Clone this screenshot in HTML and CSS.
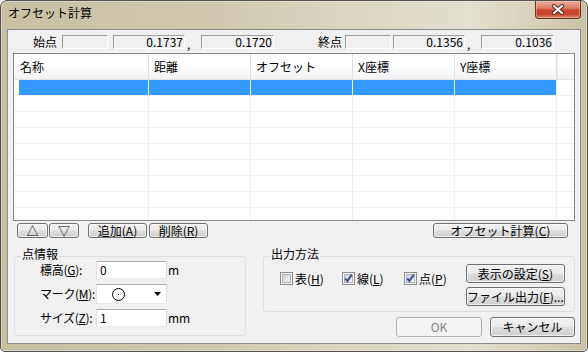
FILE: index.html
```html
<!DOCTYPE html>
<html lang="ja">
<head>
<meta charset="utf-8">
<title>オフセット計算</title>
<link rel="stylesheet" href="styles.css">
</head>
<body>
<div class="window">
  <div class="titlebar">
    <span class="title">オフセット計算</span>
    <div class="close">
      <svg width="14" height="11" viewBox="0 0 14 11">
        <path d="M3 2 L11 9 M11 2 L3 9" stroke="#5a2a20" stroke-width="4.2" stroke-linecap="round" fill="none"/>
        <path d="M3 2 L11 9 M11 2 L3 9" stroke="#ffffff" stroke-width="2.2" stroke-linecap="round" fill="none"/>
      </svg>
    </div>
  </div>
  <div class="client">
    <div class="pts">
      <span class="lbl lbl-start">始点</span>
      <span class="ro w46 ml5"></span>
      <span class="ro w72 ml5">0.1737</span>
      <span class="comma">,</span>
      <span class="ro w73">0.1720</span>
      <span class="lbl lbl-end">終点</span>
      <span class="ro w46 ml3"></span>
      <span class="ro w72 ml2">0.1356</span>
      <span class="comma">,</span>
      <span class="ro w73">0.1036</span>
    </div>

    <div class="list">
      <div class="lrow head">
        <div class="cell c1">名称</div>
        <div class="cell">距離</div>
        <div class="cell">オフセット</div>
        <div class="cell">X座標</div>
        <div class="cell">Y座標</div>
        <div class="cell c6"></div>
      </div>
      <div class="lrow sel">
        <div class="cell c1"></div><div class="cell"></div><div class="cell"></div><div class="cell"></div><div class="cell"></div><div class="cell c6"></div>
      </div>
      <div class="lrow"><div class="cell c1"></div><div class="cell"></div><div class="cell"></div><div class="cell"></div><div class="cell"></div><div class="cell c6"></div></div>
      <div class="lrow"><div class="cell c1"></div><div class="cell"></div><div class="cell"></div><div class="cell"></div><div class="cell"></div><div class="cell c6"></div></div>
      <div class="lrow"><div class="cell c1"></div><div class="cell"></div><div class="cell"></div><div class="cell"></div><div class="cell"></div><div class="cell c6"></div></div>
      <div class="lrow"><div class="cell c1"></div><div class="cell"></div><div class="cell"></div><div class="cell"></div><div class="cell"></div><div class="cell c6"></div></div>
      <div class="lrow"><div class="cell c1"></div><div class="cell"></div><div class="cell"></div><div class="cell"></div><div class="cell"></div><div class="cell c6"></div></div>
      <div class="lrow"><div class="cell c1"></div><div class="cell"></div><div class="cell"></div><div class="cell"></div><div class="cell"></div><div class="cell c6"></div></div>
      <div class="lrow"><div class="cell c1"></div><div class="cell"></div><div class="cell"></div><div class="cell"></div><div class="cell"></div><div class="cell c6"></div></div>
      <div class="lrow"><div class="cell c1"></div><div class="cell"></div><div class="cell"></div><div class="cell"></div><div class="cell"></div><div class="cell c6"></div></div>
    </div>

    <div class="toolrow">
      <button class="btn b-up">△</button>
      <button class="btn b-dn">▽</button>
      <button class="btn b-add">追加(<u>A</u>)</button>
      <button class="btn b-del">削除(<u>R</u>)</button>
      <button class="btn b-calc">オフセット計算(<u>C</u>)</button>
    </div>

    <div class="bottom">
      <div class="grp grp-pt">
        <div class="grp-title">点情報</div>
        <div class="ptgrid">
          <span class="flabel">標高(<u>G</u>):</span>
          <div class="edit">0</div>
          <span class="unit">m</span>

          <span class="flabel">マーク(<u>M</u>):</span>
          <div class="combo">
            <svg class="mark" width="13" height="13" viewBox="0 0 13 13">
              <circle cx="6.5" cy="6.5" r="6" fill="none" stroke="#000" stroke-width="1"/>
              <rect x="6" y="6" width="1" height="1" fill="#000"/>
            </svg>
            <svg class="arrow" width="7" height="4" viewBox="0 0 7 4">
              <path d="M0 0 H7 L3.5 4 Z" fill="#000"/>
            </svg>
          </div>
          <span></span>

          <span class="flabel">サイズ(<u>Z</u>):</span>
          <div class="edit">1</div>
          <span class="unit">mm</span>
        </div>
      </div>

      <div class="right">
        <div class="grp grp-out">
          <div class="grp-title">出力方法</div>
          <div class="outrow">
            <div class="checks">
              <div class="chk">
                <svg width="13" height="13" viewBox="0 0 13 13">
                  <defs><linearGradient id="cg1" x1="0" y1="0" x2="1" y2="1"><stop offset="0" stop-color="#cbcfd5"/><stop offset="1" stop-color="#f7f7f7"/></linearGradient></defs>
                  <rect x="0.5" y="0.5" width="12" height="12" fill="#f4f4f4" stroke="#8e8f8f"/>
                  <rect x="2.5" y="2.5" width="8" height="8" fill="url(#cg1)" stroke="#aeb3b9"/>
                </svg>
                <span>表(<u>H</u>)</span>
              </div>
              <div class="chk">
                <svg width="13" height="13" viewBox="0 0 13 13">
                  <defs><linearGradient id="cg2" x1="0" y1="0" x2="1" y2="1"><stop offset="0" stop-color="#cbcfd5"/><stop offset="1" stop-color="#f7f7f7"/></linearGradient></defs>
                  <rect x="0.5" y="0.5" width="12" height="12" fill="#f4f4f4" stroke="#8e8f8f"/>
                  <rect x="2.5" y="2.5" width="8" height="8" fill="url(#cg2)" stroke="#aeb3b9"/>
                  <path d="M3.3 6.3 L5.4 9 L9.8 2.6" stroke="#3a4f93" stroke-width="2" fill="none"/>
                </svg>
                <span>線(<u>L</u>)</span>
              </div>
              <div class="chk">
                <svg width="13" height="13" viewBox="0 0 13 13">
                  <defs><linearGradient id="cg3" x1="0" y1="0" x2="1" y2="1"><stop offset="0" stop-color="#cbcfd5"/><stop offset="1" stop-color="#f7f7f7"/></linearGradient></defs>
                  <rect x="0.5" y="0.5" width="12" height="12" fill="#f4f4f4" stroke="#8e8f8f"/>
                  <rect x="2.5" y="2.5" width="8" height="8" fill="url(#cg3)" stroke="#aeb3b9"/>
                  <path d="M3.3 6.3 L5.4 9 L9.8 2.6" stroke="#3a4f93" stroke-width="2" fill="none"/>
                </svg>
                <span>点(<u>P</u>)</span>
              </div>
            </div>
            <div class="outbtns">
              <button class="btn">表示の設定(<u>S</u>)</button>
              <button class="btn">ファイル出力(<u>F</u>)...</button>
            </div>
          </div>
        </div>
        <div class="okrow">
          <button class="btn b-ok disabled">OK</button>
          <button class="btn b-cancel">キャンセル</button>
        </div>
      </div>
    </div>
  </div>
</div>
</body>
</html>
```

FILE: styles.css
```css
* { box-sizing: border-box; }
html, body { margin: 0; padding: 0; }
body {
  width: 588px;
  height: 352px;
  overflow: hidden;
  font-family: "Noto Sans CJK JP", "Noto Sans", sans-serif;
  font-size: 12px;
  color: #000;
  background: #ffffff;
}

.window {
  width: 588px;
  height: 352px;
  border: 1px solid #505050;
  border-radius: 7px 7px 5px 5px;
  background: linear-gradient(90deg, #c8c0a1 0%, #d0c9ae 35%, #dcd7c4 62%, #e3dfd1 80%, #d5ceb5 93%, #c9c1a3 100%);
  box-shadow: inset 0 0 0 1px rgba(255, 255, 255, 0.35);
  display: flex;
  flex-direction: column;
  overflow: hidden;
}

.titlebar {
  flex: none;
  height: 28px;
  display: flex;
  justify-content: space-between;
  align-items: flex-start;
}
.title {
  margin: 4px 0 0 7px;
  line-height: 16px;
  font-size: 12px;
}
.close {
  width: 46px;
  height: 18px;
  margin-right: 6px;
  border: 1px solid #6b3427;
  border-top: none;
  border-radius: 0 0 4px 4px;
  background: linear-gradient(#eab09e 0%, #dc8268 40%, #c7462c 55%, #c94b30 80%, #de8e6e 100%);
  box-shadow: inset 0 0 0 1px rgba(255, 220, 200, 0.35);
  display: flex;
  align-items: center;
  justify-content: center;
}

.client {
  flex: 1;
  margin: 0 6px 7px;
  border: 1px solid #8a8a8a;
  background: #f0f0f0;
  padding: 0 5px;
  display: flex;
  flex-direction: column;
}

/* start / end points row */
.pts {
  flex: none;
  display: flex;
  align-items: flex-start;
  height: 14px;
  margin-top: 5px;
}
.lbl { width: 24px; line-height: 14px; }
.lbl-start { margin-left: 20px; }
.lbl-end { margin-left: 44px; }
.ro {
  height: 14px;
  border: 1px solid;
  border-color: #a0a0a0 #ffffff #ffffff #a0a0a0;
  background: #f0f0f0;
  text-align: right;
  padding-right: 1px;
  line-height: 12px;
}
.w46 { width: 46px; }
.w72 { width: 72px; }
.w73 { width: 73px; }
.ml5 { margin-left: 5px; }
.ml3 { margin-left: 3px; }
.ml2 { margin-left: 2px; }
.comma {
  width: 16px;
  padding: 2px 0 0 2px;
  line-height: 14px;
  height: 16px;
}

/* list view */
.list {
  flex: none;
  margin-top: 4px;
  height: 168px;
  border: 1px solid #828790;
  background: #ffffff;
  overflow: hidden;
}
.lrow {
  display: flex;
  height: 16px;
  border-bottom: 1px solid #f0f0f0;
}
.lrow.head {
  height: 26px;
  border-bottom: 1px solid #e5e5e5;
  background: linear-gradient(#ffffff 0%, #ffffff 40%, #f2f3f5 100%);
}
.cell {
  flex: none;
  width: 102px;
  border-right: 1px solid #f0f0f0;
}
.cell.c1 { width: 135px; }
.cell.c6 { flex: 1; border-right: none; }
.head .cell {
  border-right-color: #dedede;
  padding-left: 5px;
  line-height: 25px;
}
.head .c1 { padding-left: 6px; }
.head .c6 { border-left: 1px solid #ececec; }
.sel .cell { background-color: #3399ff; }
.sel .c1 { padding-left: 5px; background-clip: content-box; }
.sel .c6 { background: none; }

/* buttons */
.btn {
  font: inherit;
  font-size: 12px;
  color: #000;
  padding: 0;
  margin: 0;
  border: 1px solid #707070;
  border-radius: 3px;
  background: linear-gradient(#f2f2f2 0%, #ebebeb 48%, #dddddd 52%, #cfcfcf 100%);
  box-shadow: inset 0 0 0 1px rgba(255, 255, 255, 0.65);
  display: flex;
  align-items: center;
  justify-content: center;
  line-height: 12px;
  white-space: nowrap;
}
.btn.disabled {
  border-color: #adb2b5;
  background: #f4f4f4;
  color: #838383;
  box-shadow: none;
}

.toolrow {
  flex: none;
  display: flex;
  height: 15px;
  margin-top: 2px;
}
.toolrow .btn { height: 15px; }
.b-up { margin-left: 4px; width: 31px; }
.b-dn { margin-left: 1px; width: 30px; }
.b-add { margin-left: 9px; width: 59px; }
.b-del { margin-left: 2px; width: 59px; }
.b-calc { margin-left: auto; margin-right: 7px; width: 135px; }

/* bottom area */
.bottom {
  flex: none;
  display: flex;
  margin-top: 18px;
}
.grp {
  border: 1px solid #d5dfe5;
  border-radius: 3px;
}
.grp-title {
  width: fit-content;
  height: 14px;
  margin: -10px 0 0 6px;
  padding: 0 1px;
  background: #f0f0f0;
  line-height: 14px;
}
.grp-pt {
  margin-left: 1px;
  width: 232px;
  height: 80px;
}
.ptgrid {
  display: grid;
  grid-template-columns: 56px 71px auto;
  grid-template-rows: 18px 20px 18px;
  row-gap: 5px;
  margin-left: 25px;
  align-items: center;
}
.flabel {
  line-height: 14px;
  white-space: nowrap;
  letter-spacing: -0.3px;
}
.edit {
  height: 18px;
  border: 1px solid;
  border-color: #abadb3 #dbdfe6 #e3e9ef #e2e3ea;
  background: #ffffff;
  padding-left: 3px;
  line-height: 16px;
}
.unit { margin-left: 1px; line-height: 14px; }
.combo {
  height: 20px;
  border: 1px solid;
  border-color: #abadb3 #dbdfe6 #e3e9ef #e2e3ea;
  background: #ffffff;
  display: flex;
  align-items: center;
}
.combo .mark { margin-left: 15px; }
.combo .arrow { margin-left: auto; margin-right: 5px; }

.right {
  margin-left: auto;
  width: 312px;
  display: flex;
  flex-direction: column;
}
.grp-out { height: 56px; }
.outrow {
  display: flex;
  align-items: flex-start;
}
.checks {
  display: flex;
  margin: 11px 0 0 16px;
}
.chk {
  width: 62px;
  display: flex;
  align-items: center;
  gap: 2px;
  line-height: 13px;
}
.chk svg { flex: none; }
.outbtns {
  margin: 3px 13px 0 auto;
  width: 99px;
  display: flex;
  flex-direction: column;
  gap: 4px;
}
.outbtns .btn { height: 19px; }

.okrow {
  display: flex;
  justify-content: flex-end;
  gap: 8px;
  margin-top: 5px;
}
.okrow .btn { height: 20px; }
.b-ok { width: 86px; }
.b-cancel { width: 85px; }
```
